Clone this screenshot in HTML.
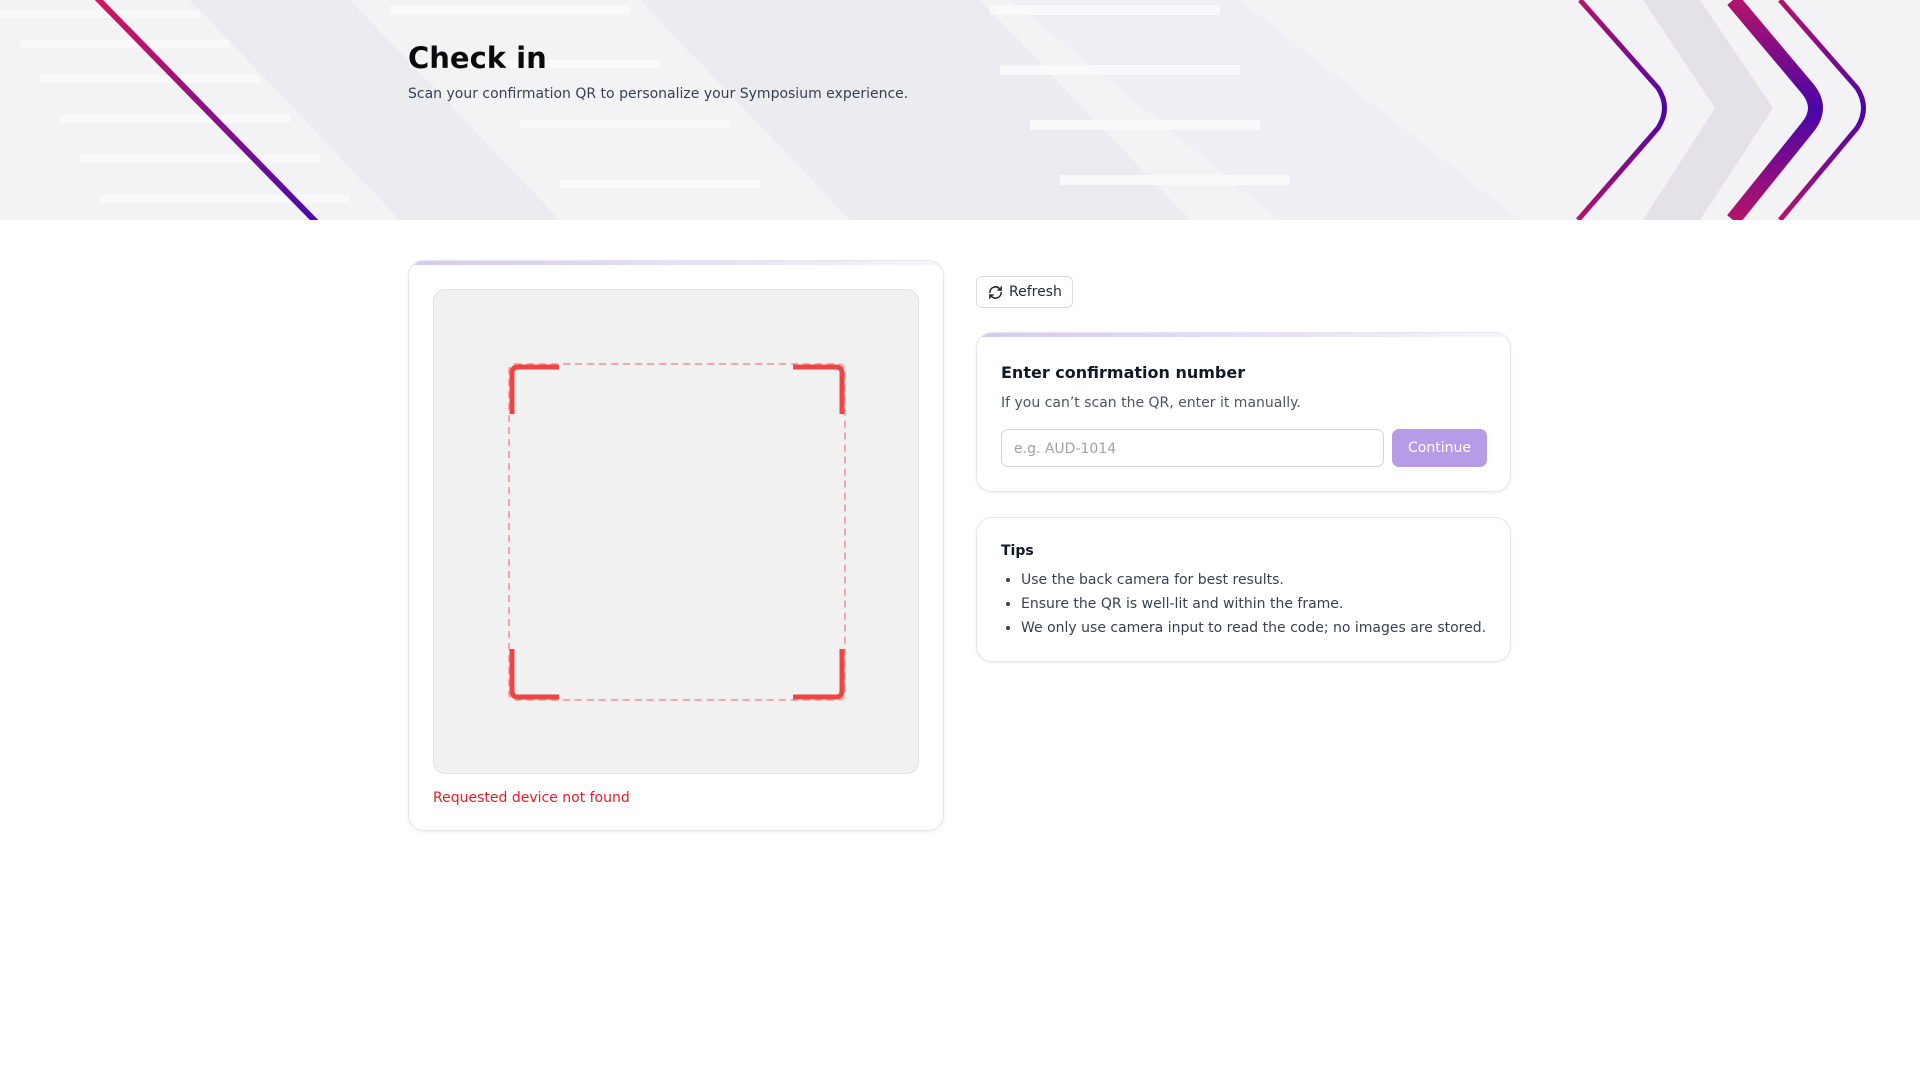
<!DOCTYPE html>
<html><head><meta charset="utf-8"><style>
*{box-sizing:border-box;margin:0;padding:0}
body{width:1920px;height:1080px;background:#fff;font-family:"DejaVu Sans","Liberation Sans",sans-serif;position:relative;overflow:hidden;color:#111827}
.hdr{position:absolute;left:0;top:0;width:1920px;height:220px;background:#f3f3f6;overflow:hidden}
.hdr svg{position:absolute;left:0;top:0}
h1{position:absolute;left:408px;top:41px;font-size:29px;font-weight:bold;color:#0b0b0b}
.sub{position:absolute;left:408px;top:86px;font-size:14px;color:#374151}
.card{position:absolute;background:#fff;border:1px solid #e5e7eb;border-radius:16px;box-shadow:0 1px 3px rgba(0,0,0,.08);overflow:hidden}
.card .bar{position:absolute;left:0;top:0;right:0;height:4px;background:linear-gradient(90deg,#d6c9f1,#f6f3fb)}
.scan{position:absolute;left:24px;top:28px;width:486px;height:485px;background:#f1f1f1;border:1px solid #e2e2e4;border-radius:12px}
.err{position:absolute;left:24px;top:529px;font-size:14px;color:#e11d2a}
.btn{position:absolute;left:976px;top:276px;width:97px;height:32px;border:1px solid #d9dbe0;border-radius:6px;background:#fff;font-size:14px;color:#1f2937;display:flex;align-items:center;padding-left:32px}
.btn svg{position:absolute;left:11px;top:8px}
.t{position:absolute;left:24px;font-weight:bold;color:#111827}
.p{position:absolute;left:24px;font-size:14px;color:#4b5563}
.inp{position:absolute;left:24px;top:96px;width:383px;height:38px;border:1px solid #d1d5db;border-radius:7px;font-size:14px;color:#9ca3af;padding:11px 12px}
.go{position:absolute;left:415px;top:96px;width:95px;height:38px;border-radius:7px;background:#b69ce6;color:#fff;font-size:14px;text-align:center;line-height:38px}
ul{position:absolute;left:44px;top:50px;font-size:14px;color:#374151;line-height:24px}
</style></head><body>
<div class="hdr">
<svg width="1920" height="220" viewBox="0 0 1920 220">
<defs>
<linearGradient id="g1" x1="0" y1="0" x2="0" y2="1"><stop offset="0" stop-color="#d3175c"/><stop offset="1" stop-color="#4a0aab"/></linearGradient>
<linearGradient id="g2" x1="0" y1="0" x2="0" y2="1"><stop offset="0" stop-color="#b4146a"/><stop offset=".5" stop-color="#4a05a8"/><stop offset="1" stop-color="#b4146a"/></linearGradient>
</defs>
<g fill="#ecebef">
<polygon points="190,0 350,0 560,220 400,220"/>
<polygon points="640,0 980,0 1190,220 850,220"/>
<polygon points="1010,0 1240,0 1520,220 1280,220" opacity=".5"/>
</g>
<g fill="#f9f9fb">
<rect x="0" y="10" width="200" height="8"/><rect x="20" y="40" width="210" height="8"/><rect x="40" y="75" width="220" height="8"/><rect x="60" y="115" width="230" height="8"/><rect x="80" y="155" width="240" height="8"/><rect x="100" y="195" width="250" height="8"/>
<rect x="390" y="5" width="240" height="10"/><rect x="410" y="60" width="250" height="8"/><rect x="520" y="120" width="210" height="8"/><rect x="560" y="180" width="200" height="8"/>
<rect x="990" y="5" width="230" height="10"/><rect x="1000" y="65" width="240" height="10"/><rect x="1030" y="120" width="230" height="10"/><rect x="1060" y="175" width="230" height="10"/>
</g>
<polygon points="1643,0 1700,0 1773,108 1700,220 1643,220 1715,108" fill="#e4e2e8"/>
<line x1="95" y1="-4" x2="318" y2="224" stroke="url(#g1)" stroke-width="6"/>
<path d="M1580,0 L1658,88 Q1671,108 1658,128 L1578,220" fill="none" stroke="url(#g2)" stroke-width="5"/>
<path d="M1733,0 L1807,88 Q1824,108 1807,128 L1733,220" fill="none" stroke="url(#g2)" stroke-width="15"/>
<path d="M1780,0 L1857,88 Q1870,108 1857,128 L1780,220" fill="none" stroke="url(#g2)" stroke-width="5"/>
</svg>
<h1>Check in</h1>
<div class="sub">Scan your confirmation QR to personalize your Symposium experience.</div>
</div>

<div class="card" style="left:408px;top:260px;width:536px;height:571px">
<div class="bar"></div>
<div class="scan">
<svg width="486" height="485" style="position:absolute;left:0;top:0">
<rect x="75" y="74" width="336" height="336" rx="6" fill="none" stroke="#f4a5a5" stroke-width="2" stroke-dasharray="7,5"/>
<g fill="none" stroke="#ef4444" stroke-width="5">
<path d="M78,124 V83 Q78,77 84,77 H125"/>
<path d="M359,77 H402 Q408,77 408,83 V124"/>
<path d="M78,359 V401 Q78,407 84,407 H125"/>
<path d="M359,407 H402 Q408,407 408,401 V359"/>
</g>
</svg>
</div>
<div class="err">Requested device not found</div>
</div>

<div class="btn"><svg width="15" height="15" viewBox="0 0 24 24" fill="none" stroke="#1f2937" stroke-width="2.4" stroke-linecap="round" stroke-linejoin="round"><path d="M21 12a9 9 0 0 1-15.5 6.2L3 16"/><path d="M3 21v-5h5"/><path d="M3 12a9 9 0 0 1 15.5-6.2L21 8"/><path d="M21 3v5h-5"/></svg>Refresh</div>

<div class="card" style="left:976px;top:332px;width:535px;height:160px">
<div class="bar"></div>
<div class="t" style="top:30px;font-size:16px">Enter confirmation number</div>
<div class="p" style="top:62px">If you can’t scan the QR, enter it manually.</div>
<div class="inp">e.g. AUD-1014</div>
<div class="go">Continue</div>
</div>

<div class="card" style="left:976px;top:517px;width:535px;height:145px">
<div class="t" style="top:25px;font-size:14px">Tips</div>
<ul><li>Use the back camera for best results.</li><li>Ensure the QR is well-lit and within the frame.</li><li>We only use camera input to read the code; no images are stored.</li></ul>
</div>
</body></html>
